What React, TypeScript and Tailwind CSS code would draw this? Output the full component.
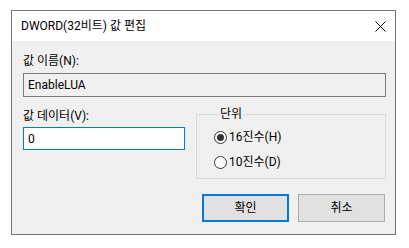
import React from "react";

const font = { fontFamily: 'Roboto, "Noto Sans CJK KR", sans-serif' };

function Radio({ checked, label }: { checked?: boolean; label: string }) {
  return (
    <div className="flex items-center h-[16px] gap-[2px]">
      <span className="w-[13px] h-[13px] rounded-full border border-[#333333] bg-white flex items-center justify-center">
        {checked && <span className="w-[7px] h-[7px] rounded-full bg-[#333333]" />}
      </span>
      <span className="text-[12px] leading-[16px] text-black">{label}</span>
    </div>
  );
}

export default function App() {
  return (
    <div className="w-[409px] h-[248px] bg-white pt-[10px] pl-[11px]" style={font}>
      <div className="w-[385px] h-[225px] border border-[#777777] flex flex-col">
        {/* title bar */}
        <div className="h-[30px] bg-white flex items-center justify-between pl-[9px] pr-[9px]">
          <span className="text-[12px] leading-[16px] text-black">DWORD(32비트) 값 편집</span>
          <svg width="11" height="11" viewBox="0 0 11 11">
            <path d="M0.5 0.5 L10.5 10.5 M10.5 0.5 L0.5 10.5" stroke="#000" strokeWidth="1" />
          </svg>
        </div>
        {/* body */}
        <div className="flex-1 bg-[#f0f0f0] pl-[11px] pr-[9px] pt-[12px] flex flex-col">
          <div className="text-[12px] leading-[16px] text-black">값 이름(N):</div>
          <div className="mt-[4px] h-[24px] border border-[#7a7a7a] bg-[#f0f0f0] flex items-center pl-[4px] text-[12px] leading-[16px] text-black">
            EnableLUA
          </div>
          <div className="mt-[9px] flex gap-[11px] items-start">
            <div className="w-[162px] pt-[2px] flex flex-col">
              <div className="text-[12px] leading-[16px] text-black">값 데이터(V):</div>
              <div className="mt-[3px] h-[23px] border border-[#0078d7] bg-white flex items-center pl-[4px] text-[12px] leading-[16px] text-black">
                0
              </div>
            </div>
            <fieldset className="w-[190px] h-[73px] border border-[#dcdcdc] pl-[17px] pt-[7px] flex flex-col gap-[9px]">
              <legend className="ml-[5px] px-[1px] text-[12px] leading-[16px] text-black">단위</legend>
              <Radio checked label="16진수(H)" />
              <Radio label="10진수(D)" />
            </fieldset>
          </div>
          <div className="mt-[15px] flex justify-end gap-[9px] pr-[1px]">
            <button className="w-[87px] h-[28px] border-2 border-[#0078d7] bg-[#e1e1e1] text-[12px] text-black">확인</button>
            <button className="w-[87px] h-[28px] border border-[#adadad] bg-[#e1e1e1] text-[12px] text-black">취소</button>
          </div>
        </div>
      </div>
    </div>
  );
}
